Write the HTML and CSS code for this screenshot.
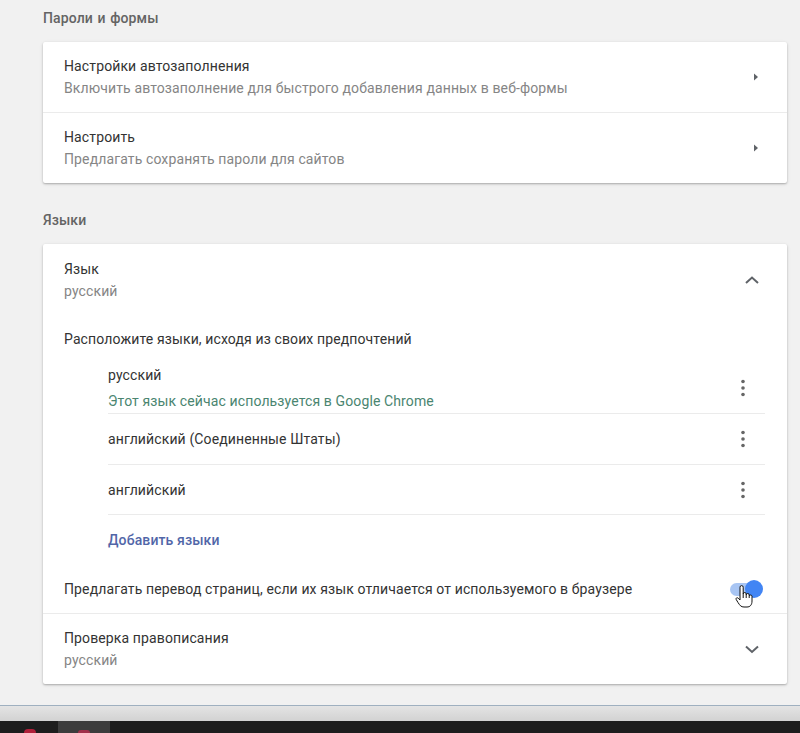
FILE: index.html
```html
<!DOCTYPE html>
<html lang="ru">
<head>
<meta charset="utf-8">
<title>Настройки</title>
<link rel="stylesheet" href="styles.css">
</head>
<body>
<div class="page">
  <h2 class="section-title first">Пароли и формы</h2>
  <div class="card">
    <div class="row">
      <div class="row-text">
        <div class="title">Настройки автозаполнения</div>
        <div class="sub">Включить автозаполнение для быстрого добавления данных в веб-формы</div>
      </div>
      <svg class="arrow" width="8" height="10" viewBox="0 0 8 10"><path d="M2 1.5 L6 5 L2 8.5 Z" fill="#5f6368"/></svg>
    </div>
    <div class="row divided">
      <div class="row-text">
        <div class="title">Настроить</div>
        <div class="sub">Предлагать сохранять пароли для сайтов</div>
      </div>
      <svg class="arrow" width="8" height="10" viewBox="0 0 8 10"><path d="M2 1.5 L6 5 L2 8.5 Z" fill="#5f6368"/></svg>
    </div>
  </div>

  <h2 class="section-title">Языки</h2>
  <div class="card">
    <div class="row lang-head">
      <div class="row-text">
        <div class="title">Язык</div>
        <div class="sub">русский</div>
      </div>
      <svg class="chevron" width="16" height="10" viewBox="0 0 16 10"><path d="M2 8 L8 2.5 L14 8" fill="none" stroke="#5f6368" stroke-width="2"/></svg>
    </div>
    <div class="hint">Расположите языки, исходя из своих предпочтений</div>
    <ul class="lang-list">
      <li class="lang-item">
        <div class="lang-text">
          <div class="lang-name">русский</div>
          <div class="lang-note">Этот язык сейчас используется в Google Chrome</div>
        </div>
        <svg class="kebab" width="4" height="18" viewBox="0 0 4 18"><circle cx="2" cy="2.5" r="1.8"/><circle cx="2" cy="9" r="1.8"/><circle cx="2" cy="15.5" r="1.8"/></svg>
      </li>
      <li class="lang-item">
        <div class="lang-text">
          <div class="lang-name">английский (Соединенные Штаты)</div>
        </div>
        <svg class="kebab" width="4" height="18" viewBox="0 0 4 18"><circle cx="2" cy="2.5" r="1.8"/><circle cx="2" cy="9" r="1.8"/><circle cx="2" cy="15.5" r="1.8"/></svg>
      </li>
      <li class="lang-item">
        <div class="lang-text">
          <div class="lang-name">английский</div>
        </div>
        <svg class="kebab" width="4" height="18" viewBox="0 0 4 18"><circle cx="2" cy="2.5" r="1.8"/><circle cx="2" cy="9" r="1.8"/><circle cx="2" cy="15.5" r="1.8"/></svg>
      </li>
    </ul>
    <div class="add-row"><span class="add-link">Добавить языки</span></div>
    <div class="translate-row">
      <span class="title">Предлагать перевод страниц, если их язык отличается от используемого в браузере</span>
      <span class="toggle">
        <span class="toggle-track"></span>
        <span class="toggle-knob"></span>
        <svg class="cursor" width="18" height="23" viewBox="0 0 18 23"><path d="M5 10 V2.2 A1.6 1.6 0 0 1 8.2 2.2 V9 A1.5 1.5 0 0 1 11.2 9 V10 A1.5 1.5 0 0 1 14.2 10 V11 A1.5 1.5 0 0 1 17 11 V16 C17 20 15 22 12 22 H9 C6 22 5 20.5 3 17.5 L1.2 14.5 C0.5 13.3 2 12 3.2 13.2 L5 15 Z M8.2 9 V13 M11.2 10 V13 M14.2 11 V13" fill="#fff" stroke="#111" stroke-width="1" stroke-linejoin="round"/></svg>
      </span>
    </div>
    <div class="row divided">
      <div class="row-text">
        <div class="title">Проверка правописания</div>
        <div class="sub">русский</div>
      </div>
      <svg class="chevron" width="16" height="10" viewBox="0 0 16 10"><path d="M2 2.5 L8 8 L14 2.5" fill="none" stroke="#5f6368" stroke-width="2"/></svg>
    </div>
  </div>
</div>
<div class="screen-bottom">
  <div class="edge-line"></div>
  <div class="edge-strip"></div>
  <div class="taskbar">
    <span class="task-dot"></span>
    <span class="task-tile"><span class="task-tile-dot"></span></span>
  </div>
</div>
</body>
</html>
```

FILE: styles.css
```css
* { box-sizing: border-box; }
html, body { margin: 0; padding: 0; }
body {
  background: #f1f1f1;
  font-family: Roboto, "Noto Sans", "Liberation Sans", sans-serif;
  font-size: 14px;
  letter-spacing: 0.12px;
  color: #333;
  width: 800px;
  height: 733px;
  overflow: hidden;
  display: flex;
  flex-direction: column;
}
.page {
  padding-left: 43px;
  width: 787px;
  height: 705px;
}
.section-title {
  margin: 27px 0 14px;
  font-size: 14px;
  font-weight: 500;
  line-height: 20px;
  word-spacing: 1px;
  color: #646464;
}
.section-title.first { margin-top: 8px; }
.card {
  background: #fff;
  border-radius: 2px;
  box-shadow: 0 1px 2px rgba(0,0,0,0.25), 0 1px 4px rgba(0,0,0,0.08);
}
.row {
  display: flex;
  align-items: center;
  padding: 13px 22px 13px 21px;
}
.row.divided { border-top: 1px solid #ebebeb; }
.row-text { flex: 1; }
.title { line-height: 22px; color: #333; }
.sub { line-height: 22px; color: #858585; }
.arrow { margin-right: 5px; }
.chevron { margin-right: 5px; }
.lang-head { padding-top: 14px; padding-bottom: 0; align-items: flex-start; }
.lang-head .chevron { margin-top: 17px; }
.hint {
  margin-top: 26px;
  padding-left: 21px;
  line-height: 22px;
  color: #333;
}
.lang-list {
  list-style: none;
  margin: 13px 22px 0 65px;
  padding: 0;
}
.lang-item {
  display: flex;
  align-items: center;
  height: 51px;
  border-bottom: 1px solid #ebebeb;
}
.lang-item:last-child { height: 50px; }
.lang-text {
  flex: 1;
  display: flex;
  flex-direction: column;
  gap: 6px;
}
.lang-name { line-height: 20px; color: #333; }
.lang-note { line-height: 20px; color: #4a8570; }
.kebab { fill: #666; margin-right: 20px; }
.add-row {
  height: 49px;
  display: flex;
  align-items: center;
  padding-left: 65px;
}
.add-link { color: #5166a8; font-weight: 500; }
.translate-row {
  height: 49px;
  display: flex;
  align-items: center;
  justify-content: space-between;
  padding: 0 23px 0 21px;
}
.toggle {
  position: relative;
  width: 34px;
  height: 18px;
}
.toggle-track {
  position: absolute;
  left: 0;
  top: 3px;
  width: 30px;
  height: 13px;
  border-radius: 7px;
  background: #a8c5f3;
}
.toggle-knob {
  position: absolute;
  left: 15px;
  top: 0;
  width: 18px;
  height: 18px;
  border-radius: 50%;
  background: #4285f4;
}
.cursor {
  position: absolute;
  left: 5px;
  top: 5px;
}
.screen-bottom { flex: 1; display: flex; flex-direction: column; }
.edge-line { height: 1px; background: #9fb0c0; }
.edge-strip {
  height: 15px;
  background: linear-gradient(#e4e4e4, #d2d2d2);
}
.taskbar {
  flex: 1;
  background: #1d1d1d;
  position: relative;
  display: flex;
  align-items: flex-end;
}
.task-dot {
  width: 12px;
  height: 4px;
  margin-left: 24px;
  border-radius: 6px 6px 0 0;
  background: #b0203a;
}
.task-tile {
  margin-left: 22px;
  width: 52px;
  height: 100%;
  background: #3c3c3c;
  display: flex;
  justify-content: center;
  align-items: flex-end;
}
.task-tile-dot {
  width: 12px;
  height: 3px;
  border-radius: 6px 6px 0 0;
  background: #a0304a;
}
```
